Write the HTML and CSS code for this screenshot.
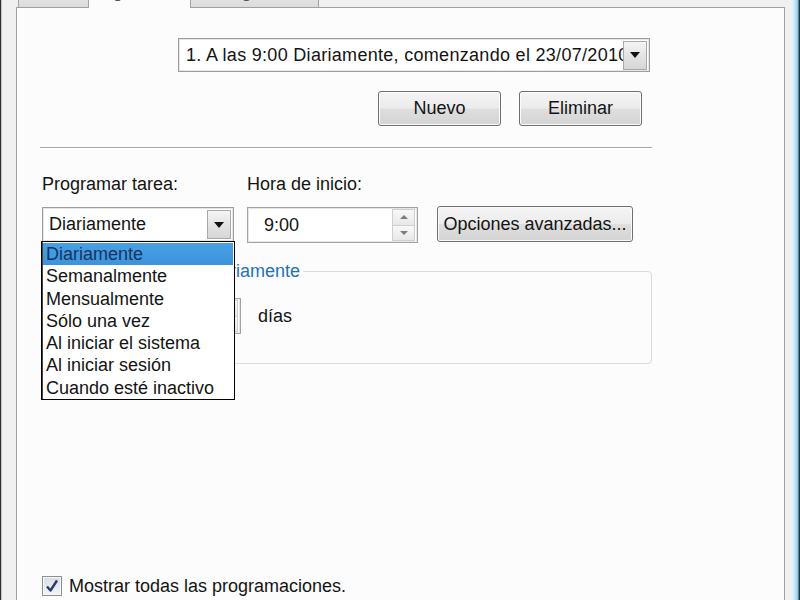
FILE: index.html
```html
<!DOCTYPE html>
<html>

<head>
    <title>Programación</title>
    <link rel="stylesheet" href="styles.css">
</head>

<body>
    <div class="window">
        <div class="edge-left"></div>
        <div class="dialog">
            <div class="tabs">
                <div class="tab tab-1">Tarea</div>
                <div class="tab tab-2 active">Programación</div>
                <div class="tab tab-3">Configuración</div>
            </div>
            <div class="panel">
                <div class="content">
                    <div class="row-top">
                        <div class="combo combo-list">
                            <span class="combo-text">1. A las 9:00 Diariamente, comenzando el 23/07/2010</span>
                            <span class="arrow-btn"><i class="tri"></i></span>
                        </div>
                    </div>

                    <div class="row-buttons">
                        <button class="btn">Nuevo</button>
                        <button class="btn">Eliminar</button>
                    </div>

                    <div class="separator"></div>

                    <div class="schedule">
                        <div class="label">Programar tarea:</div>
                        <div class="label">Hora de inicio:</div>
                        <div></div>

                        <div class="combo combo-select">
                            <span class="combo-text">Diariamente</span>
                            <span class="arrow-btn"><i class="tri"></i></span>
                            <ul class="dropdown">
                                <li class="selected">Diariamente</li>
                                <li>Semanalmente</li>
                                <li>Mensualmente</li>
                                <li>Sólo una vez</li>
                                <li>Al iniciar el sistema</li>
                                <li>Al iniciar sesión</li>
                                <li>Cuando esté inactivo</li>
                            </ul>
                        </div>

                        <div class="spin spin-time">
                            <span class="spin-text">9:00</span>
                            <span class="spin-btns">
                                <span class="spin-up"><i class="tri-up"></i></span>
                                <span class="spin-down"><i class="tri-down"></i></span>
                            </span>
                        </div>

                        <button class="btn btn-adv">Opciones avanzadas...</button>
                    </div>

                    <fieldset class="group">
                        <legend>Programar tarea diariamente</legend>
                        <div class="group-row">
                            <span class="every">Cada</span>
                            <div class="spin spin-days">
                                <span class="spin-text">1</span>
                                <span class="spin-btns">
                                    <span class="spin-up"><i class="tri-up"></i></span>
                                    <span class="spin-down"><i class="tri-down"></i></span>
                                </span>
                            </div>
                            <span class="unit">días</span>
                        </div>
                    </fieldset>

                    <label class="check-row">
                        <span class="checkbox">
                            <svg width="14" height="14" viewBox="0 0 14 14">
                                <path d="M2 7.5 L5.5 11.5 L12 1.5" fill="none" stroke="#2d3a6e" stroke-width="2.4" stroke-linejoin="round" />
                            </svg>
                        </span>
                        <span>Mostrar todas las programaciones.</span>
                    </label>
                </div>
            </div>
        </div>
        <div class="edge-right"></div>
    </div>
</body>

</html>
```

FILE: styles.css
```css
* {
    margin: 0;
    padding: 0;
    box-sizing: border-box;
}

html,
body {
    height: 600px;
    overflow: hidden;
}

body {
    background-color: #f0f0f0;
    font-family: "Liberation Sans", Arial, sans-serif;
    font-size: 18px;
    color: #141414;
}

.window {
    display: flex;
    width: 800px;
    height: 600px;
}

.edge-left {
    width: 16px;
    flex-shrink: 0;
    border-left: 1px solid #2e2e2e;
    box-shadow: inset 1px 0 #c4c4c4;
}

.dialog {
    width: 777px;
    flex-shrink: 0;
}

.edge-right {
    width: 7px;
    flex-shrink: 0;
    background: linear-gradient(to right, #d8f0f8 0, #b7e1f2 40%, #8cc6e0 70%, #2f4c60 86%, #131c24 100%);
}

/* tabs: only the lower edge is in view */
.tabs {
    display: flex;
    align-items: flex-end;
    height: 7px;
}

.tab {
    position: relative;
    height: 30px;
    flex-shrink: 0;
    padding-bottom: 4px;
    display: flex;
    align-items: flex-end;
    justify-content: center;
    line-height: 20px;
    font-size: 17px;
    color: #555;
    border: 1px solid #a3a3a3;
    border-bottom: none;
    background: linear-gradient(#f0f0f0, #dcdcdc);
}

.tab-1 {
    width: 71px;
    margin-left: 2px;
}

.tab-2 {
    width: 103px;
    margin-left: -1px;
}

.tab-3 {
    width: 129px;
    margin-left: -1px;
}

.tab.active {
    height: 31px;
    margin-bottom: -1px;
    padding-bottom: 5px;
    z-index: 1;
    background: #fcfcfc;
}

.panel {
    width: 769px;
    height: 620px;
    border: 1px solid #a0a0a0;
    background-color: #fcfcfc;
    padding: 30px 0 0 23px;
}

.content {
    width: 612px;
}

/* combo boxes */
.combo {
    position: relative;
    display: flex;
    align-items: center;
    height: 35px;
    background-color: #fff;
    border: 1px solid #9d9d9d;
    box-shadow: inset 0 0 0 1px #e6e6e6;
}

.combo-text {
    flex: 1;
    padding-left: 6px;
    white-space: nowrap;
    overflow: hidden;
}

.arrow-btn {
    width: 24px;
    height: 29px;
    margin-right: 2px;
    display: flex;
    align-items: center;
    justify-content: center;
    border: 1px solid #a9a9a9;
    background: linear-gradient(#f5f5f5, #e4e4e4 50%, #d6d6d6);
}

.tri {
    width: 0;
    height: 0;
    border-left: 5px solid transparent;
    border-right: 5px solid transparent;
    border-top: 6px solid #111;
}

.row-top {
    padding-left: 138px;
}

.combo-list {
    width: 472px;
    height: 34px;
}

.combo-list .combo-text {
    padding-left: 7px;
    letter-spacing: 0.3px;
}

.row-buttons {
    display: flex;
    justify-content: flex-end;
    gap: 18px;
    margin-top: 19px;
    padding-right: 10px;
}

.btn {
    width: 123px;
    height: 35px;
    font-family: inherit;
    font-size: 18px;
    color: #141414;
    border: 1px solid #707070;
    border-radius: 3px;
    background: linear-gradient(#f4f4f4, #ececec 48%, #dedede 52%, #d4d4d4);
    box-shadow: inset 0 0 0 1px #fbfbfb;
}

.separator {
    height: 1px;
    margin-top: 21px;
    background-color: #a8a8a8;
    box-shadow: 0 1px #ffffff;
}

.schedule {
    display: grid;
    grid-template-columns: 192px 171px 196px;
    column-gap: 13px;
    row-gap: 13px;
    margin-top: 26px;
    padding-left: 2px;
}

.label {
    line-height: 20px;
}

.combo-select {
    height: 35px;
}

.combo-select .combo-text {
    padding-left: 6px;
}

.btn-adv {
    width: 196px;
    height: 36px;
    margin-left: 6px;
    margin-top: -1px;
    padding: 0 4px;
    white-space: nowrap;
}

/* open list of the select */
.dropdown {
    position: absolute;
    left: -2px;
    top: 33px;
    width: 194px;
    height: 159px;
    z-index: 5;
    list-style: none;
    background-color: #fff;
    border: 1px solid #000;
    box-shadow: inset 1px 0 #444;
    padding: 1px 1px;
}

.dropdown li {
    height: 22.3px;
    line-height: 22px;
    padding-left: 3px;
    white-space: nowrap;
}

.dropdown li.selected {
    background: linear-gradient(#4aa0e4, #3a93dc);
    color: #15355e;
}

/* spin boxes */
.spin {
    display: flex;
    align-items: center;
    height: 36px;
    background-color: #fff;
    border: 1px solid #a3a3a3;
    box-shadow: inset 0 0 0 1px #e6e6e6;
}

.spin-text {
    flex: 1;
    padding-left: 16px;
}

.spin-btns {
    display: flex;
    flex-direction: column;
    width: 23px;
    height: 32px;
    margin-right: 2px;
}

.spin-up,
.spin-down {
    flex: 1;
    display: flex;
    align-items: center;
    justify-content: center;
    border: 1px solid #cfcfcf;
    background: linear-gradient(#f8f8f8, #e8e8e8);
}

.spin-down {
    border-top: none;
}

.tri-up,
.tri-down {
    width: 0;
    height: 0;
    border-left: 4px solid transparent;
    border-right: 4px solid transparent;
}

.tri-up {
    border-bottom: 4px solid #7d7d7d;
}

.tri-down {
    border-top: 4px solid #7d7d7d;
}

/* group box */
.group {
    width: 610px;
    margin: 18px 0 0 2px;
    padding: 0 0 29px 0;
    border: 1px solid #d3dce2;
    border-radius: 4px;
}

.group legend {
    margin-left: 24px;
    padding: 0 3px;
    line-height: 20px;
    color: #1f72b8;
}

.group-row {
    display: flex;
    align-items: center;
    padding: 17px 0 0 17px;
}

.every {
    width: 110px;
}

.spin-days {
    width: 71px;
}

.spin-days .spin-text {
    padding-left: 8px;
}

.unit {
    margin-left: 17px;
}

/* footer check */
.check-row {
    display: flex;
    align-items: center;
    gap: 7px;
    margin-top: 212px;
    padding-left: 2px;
    line-height: 20px;
}

.checkbox {
    width: 20px;
    height: 20px;
    display: flex;
    align-items: center;
    justify-content: center;
    border: 1px solid #8e8f8f;
    background: linear-gradient(#d9dde6, #f3f4f8);
    box-shadow: inset 0 0 0 1px #f7f7f7;
}
```
